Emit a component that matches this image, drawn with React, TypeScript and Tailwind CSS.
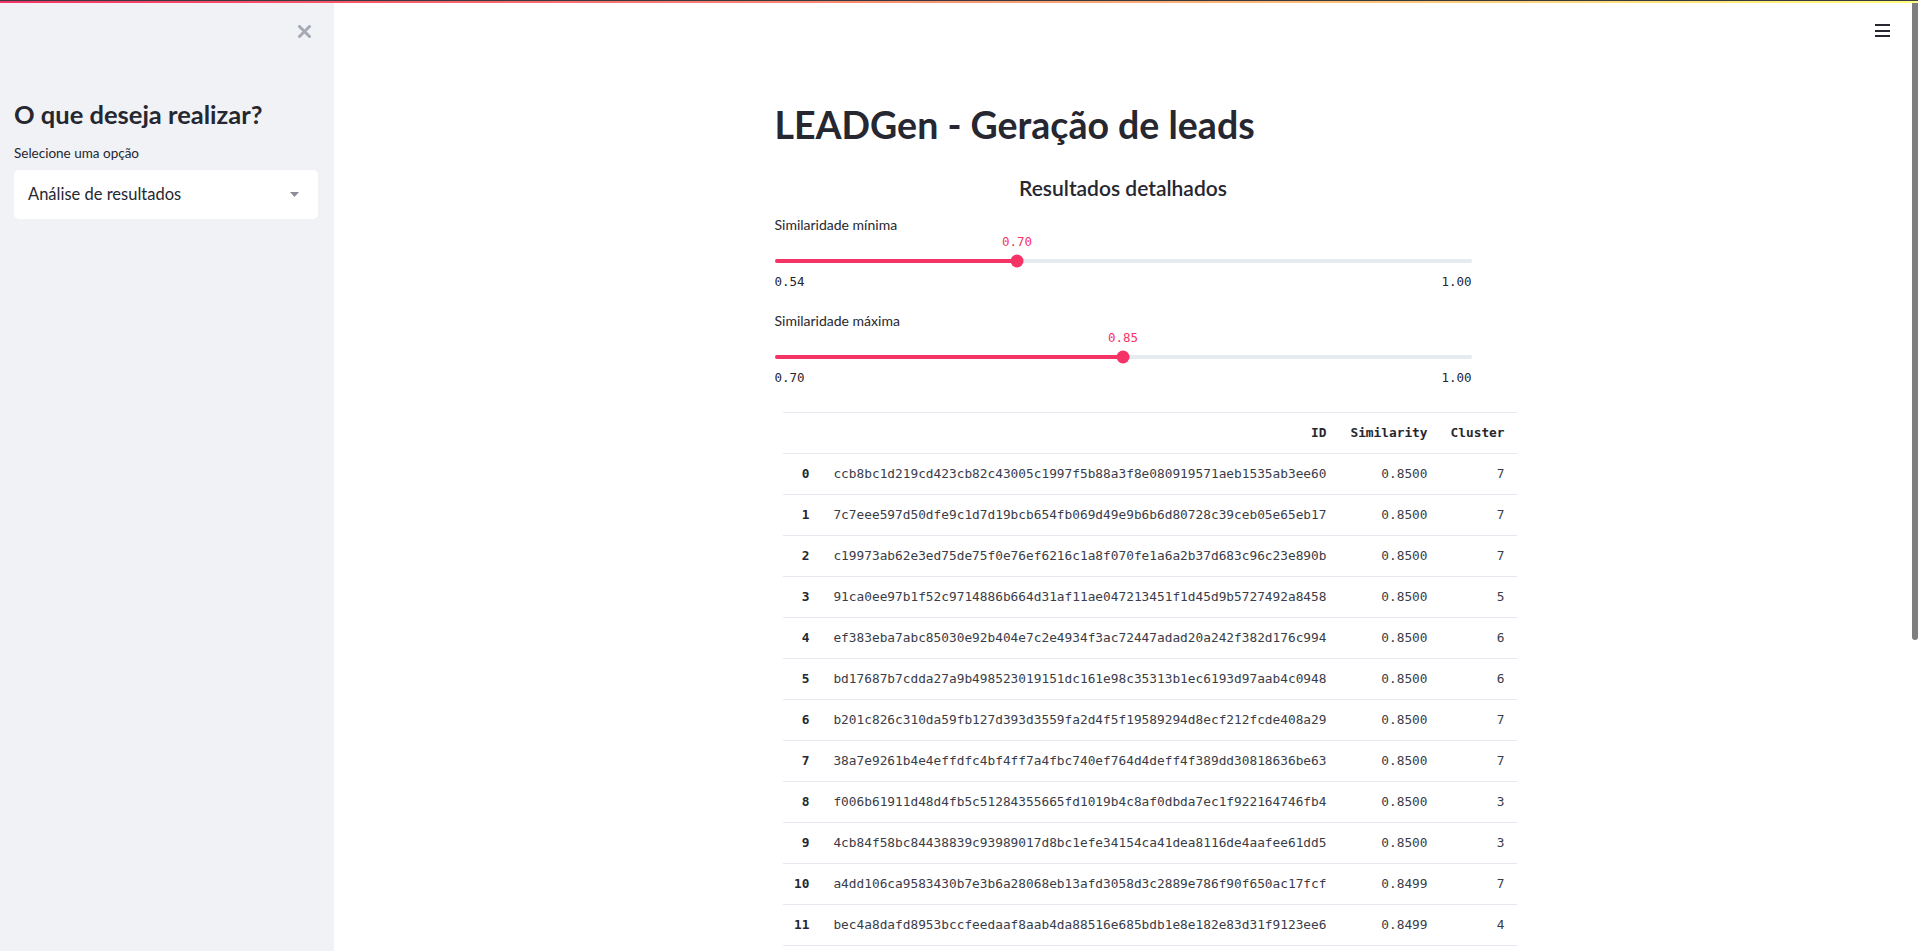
const sans = "font-['Lato',_'Noto_Sans',_sans-serif]";
const mono = "font-['DejaVu_Sans_Mono',_'Liberation_Mono',_monospace]";

type Row = { id: string; similarity: string; cluster: number };

const rows: Row[] = [
  { id: 'ccb8bc1d219cd423cb82c43005c1997f5b88a3f8e080919571aeb1535ab3ee60', similarity: '0.8500', cluster: 7 },
  { id: '7c7eee597d50dfe9c1d7d19bcb654fb069d49e9b6b6d80728c39ceb05e65eb17', similarity: '0.8500', cluster: 7 },
  { id: 'c19973ab62e3ed75de75f0e76ef6216c1a8f070fe1a6a2b37d683c96c23e890b', similarity: '0.8500', cluster: 7 },
  { id: '91ca0ee97b1f52c9714886b664d31af11ae047213451f1d45d9b5727492a8458', similarity: '0.8500', cluster: 5 },
  { id: 'ef383eba7abc85030e92b404e7c2e4934f3ac72447adad20a242f382d176c994', similarity: '0.8500', cluster: 6 },
  { id: 'bd17687b7cdda27a9b498523019151dc161e98c35313b1ec6193d97aab4c0948', similarity: '0.8500', cluster: 6 },
  { id: 'b201c826c310da59fb127d393d3559fa2d4f5f19589294d8ecf212fcde408a29', similarity: '0.8500', cluster: 7 },
  { id: '38a7e9261b4e4effdfc4bf4ff7a4fbc740ef764d4deff4f389dd30818636be63', similarity: '0.8500', cluster: 7 },
  { id: 'f006b61911d48d4fb5c51284355665fd1019b4c8af0dbda7ec1f922164746fb4', similarity: '0.8500', cluster: 3 },
  { id: '4cb84f58bc84438839c93989017d8bc1efe34154ca41dea8116de4aafee61dd5', similarity: '0.8500', cluster: 3 },
  { id: 'a4dd106ca9583430b7e3b6a28068eb13afd3058d3c2889e786f90f650ac17fcf', similarity: '0.8499', cluster: 7 },
  { id: 'bec4a8dafd8953bccfeedaaf8aab4da88516e685bdb1e8e182e83d31f9123ee6', similarity: '0.8499', cluster: 4 },
];

function Slider({
  label,
  value,
  min,
  max,
  pct,
}: {
  label: string;
  value: string;
  min: string;
  max: string;
  pct: number;
}) {
  return (
    <div className="flex flex-col">
      <div className={`${sans} text-[14px] leading-[18px] text-[#262730]`}>{label}</div>
      <div className="relative mt-[25px] h-[4px] rounded-full bg-[#e6eaf1]">
        <div className="h-full rounded-full bg-[#f63366]" style={{ width: `${pct}%` }} />
        <div
          className="absolute top-1/2 h-[13px] w-[13px] -translate-x-1/2 -translate-y-1/2 rounded-full bg-[#f63366]"
          style={{ left: `${pct}%` }}
        />
        <div
          className={`${mono} absolute -top-[24px] -translate-x-1/2 text-[12.5px] leading-[14px] text-[#f63366]`}
          style={{ left: `${pct}%` }}
        >
          {value}
        </div>
      </div>
      <div className={`${mono} mt-[12px] flex justify-between text-[12.5px] leading-[14px] text-[#262730]`}>
        <span>{min}</span>
        <span>{max}</span>
      </div>
    </div>
  );
}

function ResultsTable() {
  return (
    <table className={`${mono} ml-[8px] w-[734px] table-fixed border-collapse text-[12.8px] text-[#3a3c48]`}>
      <colgroup>
        <col className="w-[39px]" />
        <col className="w-[520px]" />
        <col className="w-[101px]" />
        <col className="w-[74px]" />
      </colgroup>
      <thead>
        <tr className="h-[41px] border-y border-[#e6e9ef] font-bold text-[#262730]">
          <th className="pr-3 text-right"></th>
          <th className="pr-[15px] text-right">ID</th>
          <th className="pr-[15px] text-right">Similarity</th>
          <th className="pr-[12px] text-right">Cluster</th>
        </tr>
      </thead>
      <tbody>
        {rows.map((r, i) => (
          <tr key={i} className="h-[41px] border-b border-[#e6e9ef]">
            <td className="pr-3 text-right font-bold text-[#262730]">{i}</td>
            <td className="whitespace-nowrap pr-[15px] text-right">{r.id}</td>
            <td className="pr-[15px] text-right">{r.similarity}</td>
            <td className="pr-[12px] text-right">{r.cluster}</td>
          </tr>
        ))}
      </tbody>
    </table>
  );
}

function Sidebar() {
  return (
    <aside className="flex w-[334px] shrink-0 flex-col bg-[#f0f2f6] pl-[14px] pr-[16px]">
      <div className="flex h-[56px] items-center justify-end pr-[7px]">
        <svg width="13" height="13" viewBox="0 0 13 13">
          <path d="M1.5 1.5l10 10M11.5 1.5l-10 10" stroke="#a6a9b6" strokeWidth="3" strokeLinecap="round" />
        </svg>
      </div>
      <h2 className={`${sans} mt-[40px] text-[25.5px] font-bold leading-[30px] text-[#262730]`}>
        O que deseja realizar?
      </h2>
      <div className={`${sans} mt-[16px] text-[13.5px] leading-[16px] text-[#262730]`}>Selecione uma opção</div>
      <div className="mt-[9px] flex h-[49px] items-center justify-between rounded-[5px] bg-white pl-[14px] pr-[19px]">
        <span className={`${sans} text-[16.5px] text-[#262730]`}>Análise de resultados</span>
        <svg width="9" height="5" viewBox="0 0 9 5">
          <path d="M0 0h9L4.5 5z" fill="#8a8d99" />
        </svg>
      </div>
    </aside>
  );
}

export default function App() {
  return (
    <div className="flex h-screen flex-col overflow-hidden bg-white">
      <div className="h-[1px] bg-[#3a3b40]" />
      <div className="h-[2px] bg-[linear-gradient(90deg,#f63366,#fffd80)]" />
      <div className="flex min-h-0 flex-1">
        <Sidebar />
        <main className="flex min-w-0 flex-1 flex-col overflow-hidden">
          <div className="flex h-[40px] shrink-0 justify-end">
            <div className="mr-[22px] mt-[21px] flex h-[13px] w-[15px] flex-col justify-between">
              <div className="h-[2px] bg-[#262730]" />
              <div className="h-[2px] bg-[#262730]" />
              <div className="h-[2px] bg-[#262730]" />
            </div>
          </div>
          <div className="mx-auto w-[697px] pt-[60px]">
            <h1 className={`${sans} text-[37.5px] font-bold leading-[44px] text-[#262730]`}>
              LEADGen - Geração de leads
            </h1>
            <h3 className={`${sans} mt-[28px] text-center text-[21px] font-semibold leading-[26px] text-[#262730]`}>
              Resultados detalhados
            </h3>
            <div className="mt-[15px] flex flex-col gap-[23px]">
              <Slider label="Similaridade mínima" value="0.70" min="0.54" max="1.00" pct={34.8} />
              <Slider label="Similaridade máxima" value="0.85" min="0.70" max="1.00" pct={50} />
            </div>
            <div className="mt-[27px]">
              <ResultsTable />
            </div>
          </div>
        </main>
        <div className="w-[6px] shrink-0">
          <div className="h-[637px] rounded-b-[3px] bg-[#7f7f7f]" />
        </div>
      </div>
    </div>
  );
}
